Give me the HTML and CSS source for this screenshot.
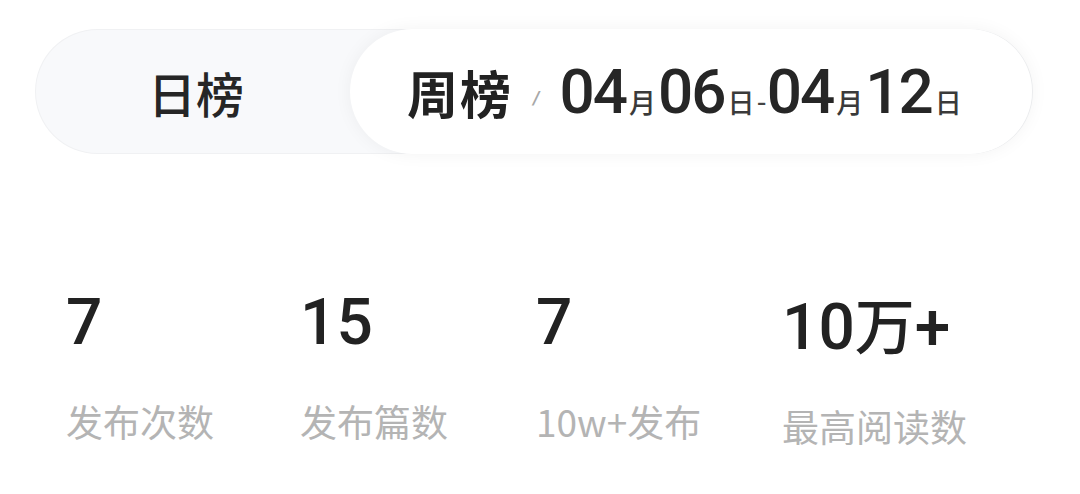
FILE: index.html
```html
<!DOCTYPE html>
<html lang="zh-CN">
<head>
<meta charset="utf-8">
<link rel="stylesheet" href="styles.css">
</head>
<body>
<div class="tabs">
  <div class="tab tab-day">日榜</div>
  <div class="tab tab-week">
    <span class="week-title">周榜</span>
    <span class="slash">/</span>
    <span class="date"><span class="num">04</span><span class="unit">月</span><span class="num">06</span><span class="unit">日</span><span class="dash">-</span><span class="num">04</span><span class="unit">月</span><span class="num">12</span><span class="unit">日</span></span>
  </div>
</div>
<div class="stats">
  <div class="stat">
    <div class="value">7</div>
    <div class="label">发布次数</div>
  </div>
  <div class="stat">
    <div class="value">15</div>
    <div class="label">发布篇数</div>
  </div>
  <div class="stat">
    <div class="value">7</div>
    <div class="label">10w+发布</div>
  </div>
  <div class="stat">
    <div class="value">10<span class="cjk">万</span>+</div>
    <div class="label">最高阅读数</div>
  </div>
</div>
</body>
</html>
```
FILE: styles.css
```css
html, body {
  margin: 0;
  padding: 0;
  background: #ffffff;
}
body {
  width: 1080px;
  height: 494px;
  overflow: hidden;
  font-family: "Noto Sans CJK SC", "Noto Sans", sans-serif;
  color: #222222;
}
.tabs {
  margin: 30px 0 0 36px;
  width: 996px;
  height: 123px;
  border-radius: 62px;
  background: #f8f9fb;
  box-shadow: 0 0 0 1px #f0f1f3;
  display: flex;
  align-items: stretch;
}
.tab {
  display: flex;
  align-items: center;
}
.tab-day {
  width: 314px;
  justify-content: center;
  font-size: 48px;
  font-weight: 500;
  color: #262626;
  padding-left: 6px;
  box-sizing: border-box;
}
.tab-week {
  flex: 1;
  background: #ffffff;
  border-radius: 63px;
  margin: -1px 0;
  box-shadow: 0 0 18px rgba(0, 0, 0, 0.05);
  padding-left: 57px;
}
.week-title {
  font-size: 51px;
  font-weight: 700;
  color: #222222;
  letter-spacing: 2px;
}
.slash {
  font-family: "Roboto", sans-serif;
  font-size: 18px;
  font-style: italic;
  font-weight: 700;
  color: #a8a8a8;
  margin: 12px 20px 0 20px;
}
.date {
  display: flex;
  align-items: baseline;
  color: #262626;
}
.num {
  font-family: "Roboto", sans-serif;
  font-size: 62px;
  font-weight: 500;
  letter-spacing: -2px;
}
.unit {
  font-size: 27px;
  font-weight: 500;
  color: #3a3a3a;
  margin: 0 2px 0 3px;
}
.dash {
  font-family: "Roboto", sans-serif;
  font-size: 30px;
  color: #444444;
  margin: 0 1px;
}
.stats {
  display: grid;
  grid-template-columns: 234px 236px 246px 1fr;
  padding-left: 66px;
  margin-top: 138px;
}
.value {
  font-family: "Roboto", sans-serif;
  font-size: 64px;
  line-height: 64px;
  font-weight: 500;
  color: #222222;
}
.value .cjk {
  font-family: "Noto Sans CJK SC", sans-serif;
  font-weight: 500;
  font-size: 60px;
}
.label {
  margin-top: 46px;
  font-size: 37px;
  line-height: 40px;
  color: #b4b4b4;
  white-space: nowrap;
}
```
